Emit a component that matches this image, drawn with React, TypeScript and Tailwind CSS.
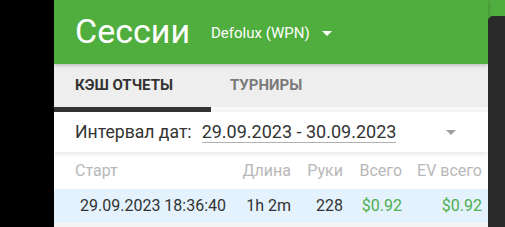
import React from 'react';

const font = { fontFamily: 'Roboto, "Noto Sans", sans-serif' };

// column widths for the sessions table (right aligned numbers)
const cols = [
  { key: 'len', w: 'w-[60px]' },
  { key: 'hands', w: 'w-[52px]' },
  { key: 'total', w: 'w-[59px]' },
  { key: 'ev', w: 'w-[80px]' },
];

function Triangle({ className }: { className: string }) {
  return (
    <svg width="10" height="5" viewBox="0 0 10 5" className={className}>
      <path d="M0 0 L10 0 L5 5 Z" fill="currentColor" />
    </svg>
  );
}

export default function App() {
  return (
    <div className="relative flex w-[505px] h-[227px] overflow-hidden bg-[#2a2a2a]" style={font}>
      <div className="w-[54px] shrink-0 bg-black" />
      <div className="flex w-[434px] shrink-0 flex-col bg-[#f4f4f4]">
        {/* header */}
        <div className="relative z-20 flex h-[64px] shrink-0 items-center bg-[#50ae3e] pl-[21px] shadow-[0_1px_4px_rgba(0,0,0,0.25)]">
          <span className="text-[34px] leading-none text-white mt-[-2px]">Сессии</span>
          <span className="ml-[21px] mt-[3px] text-[15px] text-white">Defolux (WPN)</span>
          <Triangle className="ml-[12px] mt-[3px] text-white" />
        </div>

        {/* tabs */}
        <div className="flex h-[43px] shrink-0 items-center bg-[#eeeeee]">
          <div className="w-[157px] pl-[21px] text-[15px] font-bold text-[#333333]">КЭШ ОТЧЕТЫ</div>
          <div className="pl-[19px] text-[15px] font-bold text-[#7a7a7a]">ТУРНИРЫ</div>
        </div>
        <div className="flex h-[5px] shrink-0">
          <div className="w-[157px] bg-[#333333]" />
          <div className="flex-1 bg-[#f8f8f8]" />
        </div>

        {/* date interval */}
        <div className="relative z-10 flex h-[40px] shrink-0 items-center bg-white pl-[21px] shadow-[0_2px_5px_rgba(0,0,0,0.10)]">
          <span className="text-[17.6px] text-[#333333]">Интервал дат:</span>
          <span className="ml-[10px] border-b border-[#b0b0b0] text-[18px] leading-[20px] text-[#333333]">
            29.09.2023 - 30.09.2023
          </span>
          <Triangle className="ml-[50px] text-[#a0a0a0]" />
        </div>

        {/* table header */}
        <div className="flex h-[37px] shrink-0 items-center bg-white pr-[6px] text-[16px] text-[#b8b8b8]">
          <div className="flex-1 pl-[21px]">Старт</div>
          <div className={`${cols[0].w} text-right`}>Длина</div>
          <div className={`${cols[1].w} text-right`}>Руки</div>
          <div className={`${cols[2].w} text-right`}>Всего</div>
          <div className={`${cols[3].w} text-right`}>EV всего</div>
        </div>

        {/* session row */}
        <div className="flex h-[34px] shrink-0 items-center bg-[#e3f2fd] pr-[6px] text-[16px] text-[#333333]">
          <div className="flex-1 pl-[26px]">29.09.2023 18:36:40</div>
          <div className={`${cols[0].w} text-right`}>1h 2m</div>
          <div className={`${cols[1].w} text-right`}>228</div>
          <div className={`${cols[2].w} text-right text-[#4caf50]`}>$0.92</div>
          <div className={`${cols[3].w} text-right text-[#4caf50]`}>$0.92</div>
        </div>
        <div className="flex-1 bg-[#f4f4f4]" />
      </div>

      {/* dark side panel; green header shows above its rounded corner */}
      <div className="absolute left-[488px] right-0 top-0 h-[64px] bg-[#50ae3e]" />
      <div className="absolute bottom-0 left-[488px] right-0 top-[16px] z-30 rounded-tl-[5px] bg-[#2a2a2a]" />
    </div>
  );
}
